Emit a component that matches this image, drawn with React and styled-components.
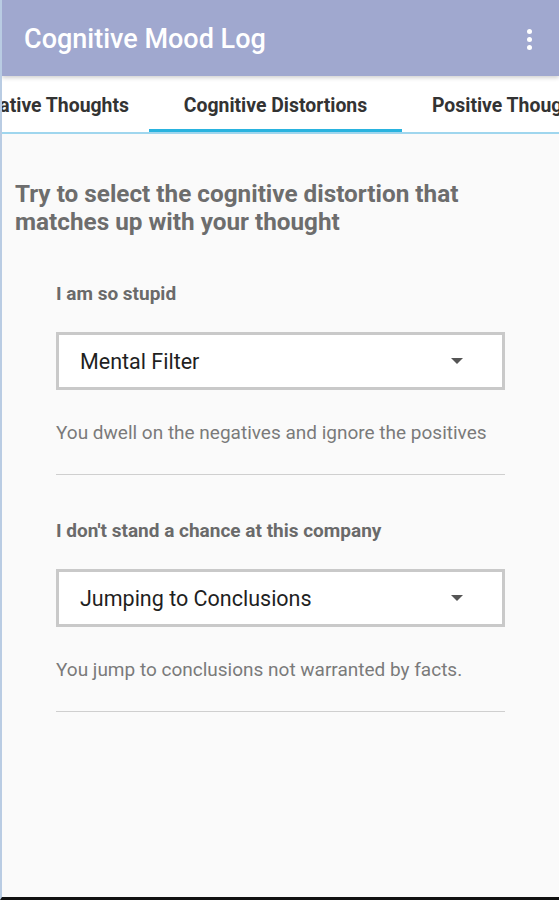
import React from 'react';
import styled, { createGlobalStyle } from 'styled-components';

const GlobalStyle = createGlobalStyle`
  html, body {
    margin: 0;
    padding: 0;
    background: #fafafa;
    font-family: Roboto, "Noto Sans", "Liberation Sans", sans-serif;
  }
`;

const Screen = styled.div`
  width: 559px;
  height: 900px;
  display: flex;
  flex-direction: column;
  overflow: hidden;
  background: #fafafa;
  border-left: 2px solid #b9cce3;
  box-sizing: border-box;
  border-bottom: 3px solid #111;
`;

const AppBar = styled.header`
  height: 76px;
  flex: none;
  display: flex;
  align-items: center;
  justify-content: space-between;
  padding: 2px 27px 0 22px;
  box-sizing: border-box;
  background: #a0a8cf;
  box-shadow: 0 2px 4px rgba(0, 0, 0, 0.18);
  position: relative;
  z-index: 2;
`;

const Title = styled.h1`
  margin: 0;
  color: #fff;
  font-size: 27px;
  font-weight: 500;
`;

const MenuDots = styled.div`
  display: flex;
  flex-direction: column;
  gap: 3px;

  span {
    width: 5px;
    height: 5px;
    border-radius: 50%;
    background: #fff;
  }
`;

const TabBar = styled.nav`
  height: 58px;
  flex: none;
  display: grid;
  grid-template-columns: 147px 253px 1fr;
  background: #fff;
  border-bottom: 2px solid #9fd6ee;
  box-sizing: border-box;
  overflow: hidden;
`;

const Tab = styled.div`
  display: flex;
  align-items: center;
  justify-content: ${p => p.$align || 'center'};
  padding: 6px ${p => (p.$align === 'flex-end' ? 20 : 0)}px 0
    ${p => (p.$align === 'flex-start' ? 30 : 0)}px;
  font-size: 19.4px;
  font-weight: 700;
  color: #333;
  white-space: nowrap;
  overflow: hidden;
  box-sizing: border-box;
  border-bottom: 5px solid ${p => (p.$active ? '#29b3df' : 'transparent')};
  margin-bottom: -2px;
`;

const Content = styled.main`
  flex: 1;
  padding: 46px 15px 0 13px;
`;

const Heading = styled.h2`
  margin: 0 0 47px;
  max-width: 480px;
  font-size: 24.3px;
  line-height: 28px;
  font-weight: 700;
  color: #6d6d6d;
`;

const Entry = styled.section`
  margin: 0 39px 45px 41px;
  border-bottom: 1.5px solid #cfcfcf;
`;

const Thought = styled.div`
  font-size: 19px;
  line-height: 22px;
  font-weight: 700;
  color: #6a6a6a;
  margin-bottom: 27px;
`;

const Select = styled.div`
  height: 58px;
  box-sizing: border-box;
  border: 3px solid #c9c9c9;
  background: #fff;
  display: flex;
  align-items: center;
  justify-content: space-between;
  padding: 0 39px 0 21px;
  font-size: 21.5px;
  color: #1f1f1f;
`;

const Caret = styled.span`
  width: 0;
  height: 0;
  border-left: 6px solid transparent;
  border-right: 6px solid transparent;
  border-top: 6px solid #555;
`;

const Description = styled.p`
  margin: 0;
  padding: 32px 0 30px;
  font-size: 19px;
  line-height: 22px;
  color: #7a7a7a;
`;

const entries = [
  {
    thought: 'I am so stupid',
    distortion: 'Mental Filter',
    description: 'You dwell on the negatives and ignore the positives'
  },
  {
    thought: "I don't stand a chance at this company",
    distortion: 'Jumping to Conclusions',
    description: 'You jump to conclusions not warranted by facts.'
  }
];

const App = () => (
  <>
    <GlobalStyle />
    <Screen>
      <AppBar>
        <Title>Cognitive Mood Log</Title>
        <MenuDots>
          <span />
          <span />
          <span />
        </MenuDots>
      </AppBar>
      <TabBar>
        <Tab $align="flex-end">Negative Thoughts</Tab>
        <Tab $active>Cognitive Distortions</Tab>
        <Tab $align="flex-start">Positive Thoughts</Tab>
      </TabBar>
      <Content>
        <Heading>
          Try to select the cognitive distortion that matches up with your thought
        </Heading>
        {entries.map(e => (
          <Entry key={e.thought}>
            <Thought>{e.thought}</Thought>
            <Select>
              {e.distortion}
              <Caret />
            </Select>
            <Description>{e.description}</Description>
          </Entry>
        ))}
      </Content>
    </Screen>
  </>
);

export default App;
